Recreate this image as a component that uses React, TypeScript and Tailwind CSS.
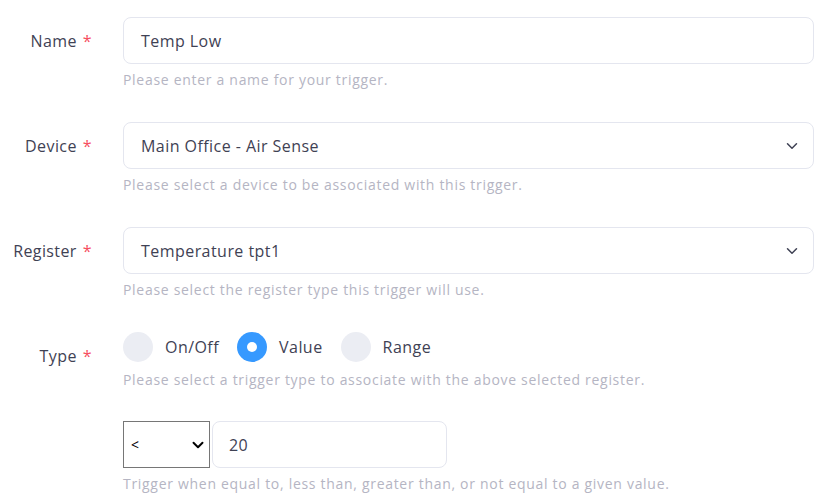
import React from 'react';

const font = { fontFamily: '"Open Sans", "Noto Sans", sans-serif' };

function Label({ text, className = '' }: { text: string; className?: string }) {
  return (
    <div className={`w-[123px] shrink-0 pr-[31px] text-right text-[16px] tracking-[0.4px] text-[#3f4254] ${className}`}>
      <span>{text}</span>
      <span className="ml-[6px] text-[#f64e60]">*</span>
    </div>
  );
}

function Help({ children, className = '' }: { children: React.ReactNode; className?: string }) {
  return (
    <div className={`mt-[5px] text-[14px] leading-[21px] tracking-[0.7px] text-[#b5b5c3] ${className}`}>{children}</div>
  );
}

function Chevron() {
  return (
    <svg width="12" height="12" viewBox="0 0 16 16" fill="none" className="text-[#3f4254]">
      <path d="M2 5l6 6 6-6" stroke="currentColor" strokeWidth="2" strokeLinecap="round" strokeLinejoin="round" />
    </svg>
  );
}

function Field({ label, value, help, select }: { label: string; value: string; help: string; select?: boolean }) {
  return (
    <div className="flex items-start">
      <Label text={label} className="h-[47px] flex items-center justify-end" />
      <div className="flex-1">
        <div className="flex h-[47px] items-center justify-between rounded-[8px] border border-[#e4e6ef] bg-white pl-[17px] pr-[15px] text-[16px] tracking-[0.45px] text-[#3f4254]">
          <span>{value}</span>
          {select && <Chevron />}
        </div>
        <Help>{help}</Help>
      </div>
    </div>
  );
}

function Radio({ label, checked }: { label: string; checked?: boolean }) {
  return (
    <div className="flex items-center gap-[12px]">
      {checked ? (
        <span className="flex h-[30px] w-[30px] items-center justify-center rounded-full bg-[#3699ff]">
          <span className="h-[10px] w-[10px] rounded-full bg-white" />
        </span>
      ) : (
        <span className="h-[30px] w-[30px] rounded-full bg-[#ebedf3]" />
      )}
      <span className="text-[16px] tracking-[0.45px] text-[#3f4254]">{label}</span>
    </div>
  );
}

export default function App() {
  return (
    <div className="h-[498px] w-[828px] overflow-hidden bg-white pr-[14px] pt-[17px]" style={font}>
      <div className="flex flex-col gap-[32px]">
        <Field label="Name" value="Temp Low" help="Please enter a name for your trigger." />
        <Field
          label="Device"
          value="Main Office - Air Sense"
          help="Please select a device to be associated with this trigger."
          select
        />
        <Field
          label="Register"
          value="Temperature tpt1"
          help="Please select the register type this trigger will use."
          select
        />
        <div className="flex items-start">
          <Label text="Type" className="pt-[12px]" />
          <div className="flex-1">
            <div className="flex h-[30px] items-center gap-[18px]">
              <Radio label="On/Off" />
              <Radio label="Value" checked />
              <Radio label="Range" />
            </div>
            <Help className="mt-[7px]">
              Please select a trigger type to associate with the above selected register.
            </Help>
          </div>
        </div>
      </div>
      <div className="ml-[123px] mt-[31px]">
        <div className="flex items-center gap-[2px]">
          <div className="flex h-[47px] w-[87px] items-center justify-between border border-[#767676] pl-[7px] pr-[5px] text-[14px] text-black">
            <span>&lt;</span>
            <svg width="12" height="12" viewBox="0 0 16 16" fill="none">
              <path d="M2 5l6 6 6-6" stroke="black" strokeWidth="2.6" strokeLinecap="round" strokeLinejoin="round" />
            </svg>
          </div>
          <div className="flex h-[47px] w-[235px] items-center rounded-[8px] border border-[#e4e6ef] pl-[16px] text-[16px] tracking-[0.45px] text-[#3f4254]">
            20
          </div>
        </div>
        <Help>Trigger when equal to, less than, greater than, or not equal to a given value.</Help>
      </div>
    </div>
  );
}
